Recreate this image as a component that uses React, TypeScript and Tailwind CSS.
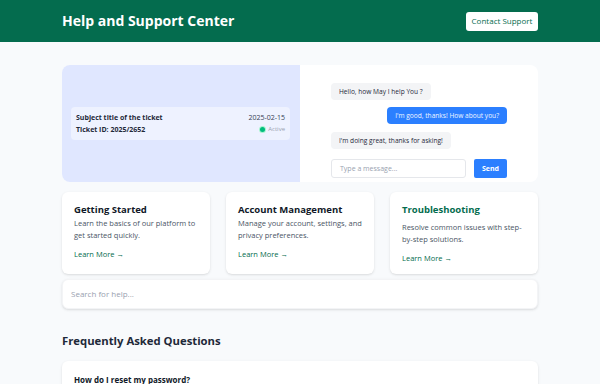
import React from "react";

export default function App() {
  const font = { fontFamily: '"Open Sans", "Noto Sans", sans-serif' };
  return (
    <div className="min-h-screen w-[600px] bg-slate-50" style={font}>
      <header className="h-[42px] bg-[#046c4e] px-[62px] flex items-center justify-between">
        <h1 className="text-white font-bold text-[14px] leading-none">Help and Support Center</h1>
        <button className="bg-white text-[#046c4e] text-[8px] h-[19px] w-[72px] rounded-[3px] leading-none">
          Contact Support
        </button>
      </header>
      <main className="px-[62px] pt-[23px]">
        <div className="flex h-[117px] bg-white rounded-lg overflow-hidden">
          <div className="w-1/2 bg-indigo-100 flex items-center pl-[9px] pr-[10px]">
            <div className="w-full h-[33px] bg-indigo-50 px-[5px] flex justify-between items-center rounded-sm">
              <div className="flex flex-col gap-[3px] text-[7px] font-bold text-gray-800 leading-[9px]">
                <span>Subject title of the ticket</span>
                <span>Ticket ID: 2025/2652</span>
              </div>
              <div className="flex flex-col items-end gap-[3px] text-[7px] leading-[9px]">
                <span className="text-gray-700">2025-02-15</span>
                <span className="flex items-center gap-[3px] text-gray-400 text-[6px]">
                  <span className="w-[5px] h-[5px] rounded-full bg-emerald-500 ring-1 ring-emerald-200"></span>
                  Active
                </span>
              </div>
            </div>
          </div>
          <div className="w-1/2 px-[31px] pt-[18px] flex flex-col text-[6.6px] leading-[9px]">
            <div className="self-start bg-gray-100 text-gray-800 h-[17px] px-[8px] flex items-center rounded-[4px]">
              Hello, how May I help You ?
            </div>
            <div className="self-end bg-blue-500 text-blue-50 h-[17px] px-[8px] flex items-center rounded-[4px] mt-[7px]">
              I'm good, thanks! How about you?
            </div>
            <div className="self-start bg-gray-100 text-gray-800 h-[17px] px-[8px] flex items-center rounded-[4px] mt-[8px]">
              I'm doing great, thanks for asking!
            </div>
            <div className="flex mt-[10px] gap-[8px]">
              <div className="flex-1 h-[19px] border border-gray-200 rounded-[3px] bg-white flex items-center px-[8px] text-gray-400 text-[7px]">
                Type a message...
              </div>
              <button className="w-[33px] h-[19px] bg-blue-500 text-white font-bold rounded-[2px] text-[7px]">Send</button>
            </div>
          </div>
        </div>

        <div className="grid grid-cols-3 gap-4 mt-[10px]">
          <div className="bg-white rounded-md shadow-sm h-[82px] px-[12px] pt-[11px]">
            <h3 className="text-[9.5px] font-bold text-gray-900 leading-[14px]">Getting Started</h3>
            <p className="text-[7.5px] text-gray-600 leading-[12px]">Learn the basics of our platform to get started quickly.</p>
            <a className="block mt-[7px] text-[7.5px] text-[#046c4e] leading-[12px]">Learn More →</a>
          </div>
          <div className="bg-white rounded-md shadow-sm h-[82px] px-[12px] pt-[11px]">
            <h3 className="text-[9.5px] font-bold text-gray-900 leading-[14px]">Account Management</h3>
            <p className="text-[7.5px] text-gray-600 leading-[12px]">Manage your account, settings, and privacy preferences.</p>
            <a className="block mt-[7px] text-[7.5px] text-[#046c4e] leading-[12px]">Learn More →</a>
          </div>
          <div className="bg-white rounded-md shadow-sm h-[82px] px-[12px] pt-[11px]">
            <h3 className="text-[9.5px] font-bold text-[#046c4e] leading-[14px]">Troubleshooting</h3>
            <p className="mt-[4px] text-[7.5px] text-gray-600 leading-[12px]">Resolve common issues with step-by-step solutions.</p>
            <a className="block mt-[7px] text-[7.5px] text-[#046c4e] leading-[12px]">Learn More →</a>
          </div>
        </div>

        <div className="mt-[5px] h-[30px] bg-white border border-gray-100 rounded-md shadow-sm flex items-center px-[8px] text-[8px] text-gray-400">
          Search for help...
        </div>

        <h2 className="mt-[24px] text-[11.3px] font-bold text-gray-800 leading-[16px]">Frequently Asked Questions</h2>

        <div className="mt-[12px] bg-white rounded-md shadow-sm h-[60px] px-[12px] pt-[13px]">
          <p className="text-[8px] font-bold text-gray-900">How do I reset my password?</p>
        </div>
      </main>
    </div>
  );
}
